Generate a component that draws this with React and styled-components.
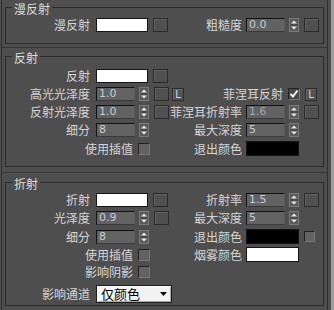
import React from 'react';
import styled, { createGlobalStyle } from 'styled-components';

const Global = createGlobalStyle`
  html, body { margin: 0; padding: 0; background: #4e4e4e; }
  body { font-family: "Noto Sans CJK SC", "Noto Sans", sans-serif; }
  * { box-sizing: border-box; }
`;

const Screen = styled.div`
  width: 334px;
  height: 310px;
  overflow: hidden;
  display: flex;
  background: #4e4e4e;
`;

const Panel = styled.div`
  width: 327px;
  height: 310px;
  margin-left: 1px;
  border-left: 1px solid #2f2f2f;
  border-right: 1px solid #2f2f2f;
  padding: 0 3px;
  display: flex;
  flex-direction: column;
`;

const ScrollStrip = styled.div`
  width: 6px;
  height: 310px;
  padding-left: 3px;
  &::after {
    content: "";
    display: block;
    width: 3px;
    height: 100%;
    background: #9c9c9c;
  }
`;

const Group = styled.fieldset`
  margin: 0;
  width: 319px;
  min-width: 0;
  border: 1px solid #2b2b2b;
  padding: ${p => p.$pt}px 0 ${p => p.$pb}px 0;
`;

const Legend = styled.legend`
  margin-left: 6px;
  padding: 3px 2px 0;
  font-size: 12px;
  line-height: 12px;
  color: #dedede;
`;

const Divider = styled.div`
  height: 1px;
  flex: none;
  margin: ${p => p.$mt}px -3px ${p => p.$mb}px;
  background: #363636;
`;

const Rows = styled.div`
  display: flex;
  flex-direction: column;
  gap: 4px;
`;

const Row = styled.div`
  display: grid;
  grid-template-columns: 84px 94px 58px 80px;
  height: ${p => p.$h || 14}px;
  margin-top: ${p => p.$mt || 0}px;
  align-items: center;
`;

const Label = styled.div`
  display: flex;
  justify-content: flex-end;
  white-space: nowrap;
  font-size: 12px;
  line-height: 14px;
  color: #d6d6d6;
`;

const InlineLabel = styled(Label)`
  width: ${p => p.$w || 37}px;
  flex: none;
`;

const Cell = styled.div`
  display: flex;
  align-items: center;
  gap: 5px;
  padding-left: ${p => p.$pl}px;
  height: 100%;
`;

const Swatch = styled.div`
  width: 52px;
  height: ${p => p.$h || 14}px;
  flex: none;
  background: ${p => p.$color};
  border: 1px solid #141414;
  ${p => p.$wide && 'width: 53px;'}
`;

const MapButton = styled.div`
  width: 15px;
  height: 14px;
  flex: none;
  border: 1px solid #2a2a2a;
  box-shadow: inset 1px 1px 0 #626262;
  background: #505050;
`;

const LButton = styled.div`
  width: 12px;
  height: 13px;
  flex: none;
  margin-left: ${p => p.$ml || 0}px;
  border: 1px solid #2c2c2c;
  box-shadow: inset 1px 1px 0 #686868;
  background: #525252;
  color: #cdd6e6;
  font-family: "DejaVu Sans", sans-serif;
  font-size: 10px;
  line-height: 11px;
  text-align: center;
`;

const SpinWrap = styled.div`
  display: flex;
  align-items: center;
  gap: 4px;
  flex: none;
`;

const SpinField = styled.div`
  width: 39px;
  height: 14px;
  background: #626262;
  border-top: 1px solid #121212;
  border-left: 1px solid #121212;
  border-bottom: 1px solid #3a3a3a;
  border-right: 1px solid #5a5a5a;
  padding-left: 2px;
  font-family: "DejaVu Sans", sans-serif;
  font-size: 11px;
  line-height: 12px;
  color: ${p => (p.$dim ? '#a4a8b0' : '#c6cdd8')};
`;

const Arrows = styled.div`
  width: 10px;
  height: 14px;
  border: 1px solid #7a7a7a;
  background: #5a5a5a;
  display: flex;
`;

const CheckBox = styled.div`
  width: ${p => p.$s || 12}px;
  height: ${p => p.$s || 12}px;
  flex: none;
  background: ${p => (p.$checked ? '#484848' : '#626262')};
  border-top: 1px solid #222;
  border-left: 1px solid #222;
  border-right: 1px solid #777;
  border-bottom: 1px solid #777;
  display: flex;
  align-items: center;
  justify-content: center;
`;

const Dropdown = styled.div`
  width: 76px;
  height: 18px;
  background: #f2f2f2;
  border: 1px solid #1c1c1c;
  box-shadow: inset 1px 1px 0 #ffffff, inset -1px -1px 0 #a8a8a8;
  display: flex;
  align-items: center;
  justify-content: space-between;
  padding: 0 4px 0 4px;
  font-size: 13px;
  line-height: 16px;
  color: #000;
`;

const Spinner = ({ value, dim }) => (
  <SpinWrap>
    <SpinField $dim={dim}>{value}</SpinField>
    <Arrows>
      <svg width="8" height="12" viewBox="0 0 8 12">
        <path d="M1 4.5 L4 1.5 L7 4.5 Z" fill="#e8e8e8" />
        <line x1="0" y1="6" x2="8" y2="6" stroke="#3c3c3c" strokeWidth="1" />
        <path d="M1 7.5 L4 10.5 L7 7.5 Z" fill="#e8e8e8" />
      </svg>
    </Arrows>
  </SpinWrap>
);

const Check = ({ checked, s }) => (
  <CheckBox $checked={checked} $s={s}>
    {checked && (
      <svg width="10" height="10" viewBox="0 0 10 10">
        <polyline points="1.5,5 4,7.5 8.5,1.5" fill="none" stroke="#f4f4f4" strokeWidth="2" />
      </svg>
    )}
  </CheckBox>
);

export default function App() {
  return (
    <Screen>
      <Global />
      <Panel>
        <Group $pt={3} $pb={11}>
          <Legend>漫反射</Legend>
          <Rows>
            <Row>
              <Label>漫反射</Label>
              <Cell $pl={6}>
                <Swatch $color="#ffffff" />
                <MapButton />
              </Cell>
              <Label>粗糙度</Label>
              <Cell $pl={4}>
                <Spinner value="0.0" />
                <MapButton />
              </Cell>
            </Row>
          </Rows>
        </Group>

        <Divider $mt={3} $mb={1} />

        <Group $pt={5} $pb={11}>
          <Legend>反射</Legend>
          <Rows>
            <Row>
              <Label>反射</Label>
              <Cell $pl={6}>
                <Swatch $color="#ffffff" />
                <MapButton />
              </Cell>
              <span />
              <span />
            </Row>
            <Row>
              <Label>高光光泽度</Label>
              <Cell $pl={6}>
                <Spinner value="1.0" />
                <MapButton />
                <LButton $ml={-2}>L</LButton>
              </Cell>
              <span />
              <Cell $pl={4}>
                <InlineLabel>菲涅耳反射</InlineLabel>
                <Check checked />
                <LButton>L</LButton>
              </Cell>
            </Row>
            <Row>
              <Label>反射光泽度</Label>
              <Cell $pl={6}>
                <Spinner value="1.0" />
                <MapButton />
              </Cell>
              <Label>菲涅耳折射率</Label>
              <Cell $pl={4}>
                <Spinner value="1.6" dim />
                <MapButton />
              </Cell>
            </Row>
            <Row>
              <Label>细分</Label>
              <Cell $pl={6}>
                <Spinner value="8" />
              </Cell>
              <Label>最大深度</Label>
              <Cell $pl={4}>
                <Spinner value="5" />
              </Cell>
            </Row>
            <Row>
              <span />
              <Cell $pl={6}>
                <InlineLabel>使用插值</InlineLabel>
                <Check />
              </Cell>
              <Label>退出颜色</Label>
              <Cell $pl={4}>
                <Swatch $color="#000000" $h={15} $wide />
              </Cell>
            </Row>
          </Rows>
        </Group>

        <Divider $mt={5} $mb={2} />

        <Group $pt={3} $pb={2}>
          <Legend>折射</Legend>
          <Rows>
            <Row>
              <Label>折射</Label>
              <Cell $pl={6}>
                <Swatch $color="#ffffff" />
                <MapButton />
              </Cell>
              <Label>折射率</Label>
              <Cell $pl={4}>
                <Spinner value="1.5" />
                <MapButton />
              </Cell>
            </Row>
            <Row>
              <Label>光泽度</Label>
              <Cell $pl={6}>
                <Spinner value="0.9" />
                <MapButton />
              </Cell>
              <Label>最大深度</Label>
              <Cell $pl={4}>
                <Spinner value="5" />
              </Cell>
            </Row>
            <Row>
              <Label>细分</Label>
              <Cell $pl={6}>
                <Spinner value="8" />
              </Cell>
              <Label>退出颜色</Label>
              <Cell $pl={4}>
                <Swatch $color="#000000" $h={15} $wide />
                <Check s={11} />
              </Cell>
            </Row>
            <Row>
              <span />
              <Cell $pl={6}>
                <InlineLabel>使用插值</InlineLabel>
                <Check />
              </Cell>
              <Label>烟雾颜色</Label>
              <Cell $pl={4}>
                <Swatch $color="#ffffff" $h={15} $wide />
              </Cell>
            </Row>
            <Row>
              <span />
              <Cell $pl={6}>
                <InlineLabel>影响阴影</InlineLabel>
                <Check />
              </Cell>
              <span />
              <span />
            </Row>
            <Row $h={18} $mt={2}>
              <Label>影响通道</Label>
              <Cell $pl={6}>
                <Dropdown>
                  <span>仅颜色</span>
                  <svg width="7" height="4" viewBox="0 0 7 4">
                    <path d="M0 0 L7 0 L3.5 4 Z" fill="#000" />
                  </svg>
                </Dropdown>
              </Cell>
              <span />
              <span />
            </Row>
          </Rows>
        </Group>
      </Panel>
      <ScrollStrip />
    </Screen>
  );
}
